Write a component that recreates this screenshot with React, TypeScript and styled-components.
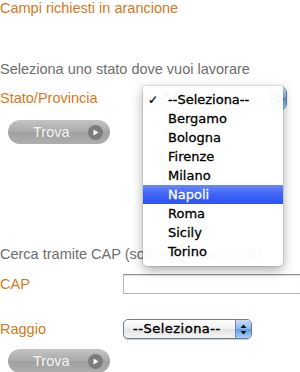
import styled, { createGlobalStyle } from 'styled-components'

const GlobalStyle = createGlobalStyle`
  html, body {
    margin: 0;
    padding: 0;
    background: #ffffff;
  }
  body {
    font-family: 'Liberation Sans', Arial, sans-serif;
    font-size: 14.5px;
    line-height: 16px;
    overflow: hidden;
  }
`

const provinces = ['--Seleziona--', 'Bergamo', 'Bologna', 'Firenze', 'Milano', 'Napoli', 'Roma', 'Sicily', 'Torino']

const TriangleIcon = () => (
  <svg width="6" height="7" viewBox="0 0 6 7">
    <path d="M0.5 0.5 L5.5 3.5 L0.5 6.5 Z" fill="#ffffff" />
  </svg>
)

const ArrowsIcon = () => (
  <svg width="7" height="11" viewBox="0 0 7 11">
    <path d="M3.5 0.5 L6.5 4 L0.5 4 Z" fill="#111" />
    <path d="M3.5 10.5 L6.5 7 L0.5 7 Z" fill="#111" />
  </svg>
)

const App = () => (
  <>
    <GlobalStyle />
    <Form>
      <Required>Campi richiesti in arancione</Required>

      <Hint $top={45}>Seleziona uno stato dove vuoi lavorare</Hint>

      <Row $top={10} $height={22}>
        <Label>Stato/Provincia</Label>
        <SelectWrap $left={20}>
          <MacSelect $width={144} $height={22}>
            <span>--Seleziona--</span>
            <Stepper>
              <ArrowsIcon />
            </Stepper>
          </MacSelect>
          <Menu>
            {provinces.map((p, i) => (
              <MenuItem key={p} $active={p === 'Napoli'}>
                <Check>{i === 0 ? '✓' : ''}</Check>
                {p}
              </MenuItem>
            ))}
          </Menu>
        </SelectWrap>
      </Row>

      <TrovaButton $top={11}>
        <span>Trova</span>
        <Go>
          <TriangleIcon />
        </Go>
      </TrovaButton>

      <Hint $top={102}>Cerca tramite CAP (solo negli Stati Uniti)</Hint>

      <Row $top={12} $height={20}>
        <Label>CAP</Label>
        <TextInput type="text" />
      </Row>

      <Row $top={25} $height={20}>
        <Label>Raggio</Label>
        <MacSelect $width={129} $height={20}>
          <span>--Seleziona--</span>
          <Stepper>
            <ArrowsIcon />
          </Stepper>
        </MacSelect>
      </Row>

      <TrovaButton $top={10}>
        <span>Trova</span>
        <Go>
          <TriangleIcon />
        </Go>
      </TrovaButton>
    </Form>
  </>
)

const Form = styled.div`
  display: flex;
  flex-direction: column;
  width: 300px;
  height: 372px;
`

const Required = styled.div`
  color: #d4781e;
`

const Hint = styled.div<{ $top: number }>`
  margin-top: ${p => p.$top}px;
  color: #6e6e6e;
  white-space: nowrap;
`

const Row = styled.div<{ $top: number; $height: number }>`
  display: flex;
  align-items: center;
  height: ${p => p.$height}px;
  margin-top: ${p => p.$top}px;
`

const Label = styled.div`
  width: 123px;
  flex-shrink: 0;
  color: #d4781e;
`

const SelectWrap = styled.div<{ $left: number }>`
  position: relative;
  margin-left: ${p => p.$left}px;
`

const MacSelect = styled.div<{ $width: number; $height: number }>`
  box-sizing: border-box;
  display: flex;
  align-items: stretch;
  width: ${p => p.$width}px;
  height: ${p => p.$height}px;
  border: 1px solid #6f7a94;
  border-radius: 5px;
  background: linear-gradient(#ffffff, #f0f0f0 50%, #e2e2e2 51%, #f6f6f6);
  box-shadow: 0 1px 1px rgba(0, 0, 0, 0.2);
  overflow: hidden;
  font-family: 'DejaVu Sans', 'Verdana', sans-serif;
  font-size: 13px;
  letter-spacing: 0.5px;
  -webkit-text-stroke: 0.35px #000;
  color: #000;

  span {
    flex: 1;
    display: flex;
    align-items: center;
    padding-left: 9px;
  }
`

const Stepper = styled.div`
  width: 15px;
  flex-shrink: 0;
  display: flex;
  align-items: center;
  justify-content: center;
  border-left: 1px solid #6f86b8;
  background: linear-gradient(#c9defa, #8ab6f0 50%, #5d9ae9 51%, #a9d0fb);
`

const Menu = styled.div`
  position: absolute;
  top: -1px;
  left: 0;
  width: 140px;
  padding: 4px 0 5px;
  background: rgba(255, 255, 255, 0.96);
  border-radius: 0 0 5px 5px;
  box-shadow: 0 4px 12px rgba(0, 0, 0, 0.35), 0 0 0 1px rgba(0, 0, 0, 0.08);
  font-family: 'DejaVu Sans', 'Verdana', sans-serif;
  font-size: 13px;
  -webkit-text-stroke: 0.3px currentColor;
  z-index: 10;
`

const MenuItem = styled.div<{ $active?: boolean }>`
  display: flex;
  align-items: center;
  height: 19px;
  color: ${p => (p.$active ? '#ffffff' : '#000000')};
  background: ${p => (p.$active ? 'linear-gradient(#6a8af8, #3f62f5 50%, #2e52f3)' : 'transparent')};
`

const Check = styled.span`
  width: 25px;
  padding-left: 5px;
  box-sizing: border-box;
  font-size: 12px;
`

const TextInput = styled.input`
  box-sizing: border-box;
  width: 177px;
  height: 20px;
  margin: 0;
  padding: 0 3px;
  border: 1px solid #b8b8b8;
  border-right: none;
  border-top-color: #8f8f8f;
  box-shadow: inset 0 1px 1px rgba(0, 0, 0, 0.12);
  background: #ffffff;
  flex-shrink: 0;
  outline: none;
`

const TrovaButton = styled.div<{ $top: number }>`
  box-sizing: border-box;
  display: flex;
  align-items: center;
  width: 102px;
  height: 24px;
  margin-top: ${p => p.$top}px;
  margin-left: 8px;
  padding: 0 7px 0 25px;
  border-radius: 12px;
  background: linear-gradient(#c4c4c4, #a9a9a9 50%, #a0a0a0 51%, #aeaeae);
  color: #f4f4f4;
  flex-shrink: 0;

  span {
    flex: 1;
  }
`

const Go = styled.div`
  width: 15px;
  height: 15px;
  border-radius: 50%;
  background: #7c7c7c;
  display: flex;
  align-items: center;
  justify-content: center;
  padding-left: 1px;
  box-sizing: border-box;
`

export default App
